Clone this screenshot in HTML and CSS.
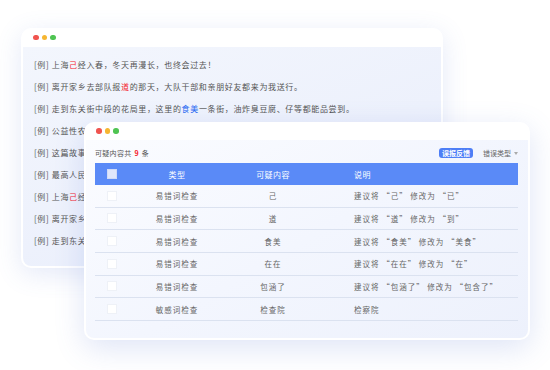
FILE: index.html
```html
<!DOCTYPE html>
<html lang="zh">
<head>
  <meta charset="UTF-8" />
  <meta name="viewport" content="width=device-width, initial-scale=1.0" />
  <title>文本纠错</title>
  <link rel="stylesheet" href="styles.css">
</head>
<body>
  <div class="stage">
    <div class="win back">
      <div class="bar"><i class="dot red"></i><i class="dot yellow"></i><i class="dot green"></i></div>
      <div class="doc">
        <p>[例] 上海<b class="err">己</b>经入春，冬天再漫长，也终会过去！</p>
        <p>[例] 离开家乡去部队报<b class="err">道</b>的那天，大队干部和亲朋好友都来为我送行。</p>
        <p>[例] 走到东关街中段的花局里，这里的<b class="hint">食美</b>一条街，油炸臭豆腐、仔等都能品尝到。</p>
        <p>[例] 公益性农村文化活动深受群众喜爱，参与的人越来越多。</p>
        <p>[例] 这篇故事情节曲折，人物形象鲜明，读来令人难忘。</p>
        <p>[例] 最高人民检查院发布了新的工作报告。</p>
        <p>[例] 上海<b class="err">己</b>经入春，冬天再漫长，也终会过去！</p>
        <p>[例] 离开家乡去部队报<b class="err">道</b>的那天，大队干部和亲朋好友都来为我送行。</p>
        <p>[例] 走到东关街中段的花局里，这里的<b class="hint">食美</b>一条街，油炸臭豆腐、仔等都能品尝到。</p>
      </div>
    </div>

    <div class="win front">
      <div class="bar"><i class="dot red"></i><i class="dot yellow"></i><i class="dot green"></i></div>
      <div class="panel">
        <div class="tools">
          <span class="count">可疑内容共 <em>9</em> 条</span>
          <span class="badge">误报反馈</span>
          <span class="filter">错误类型 <span class="caret"></span></span>
        </div>
        <div class="table">
          <div class="row head">
            <span class="cell"><span class="box"></span></span>
            <span class="cell mid">类型</span>
            <span class="cell mid">可疑内容</span>
            <span class="cell desc">说明</span>
          </div>
          <div class="row">
            <span class="cell"><span class="box"></span></span>
            <span class="cell mid">易错词检查</span>
            <span class="cell mid">己</span>
            <span class="cell desc">建议将 “己” 修改为 “已”</span>
          </div>
          <div class="row">
            <span class="cell"><span class="box"></span></span>
            <span class="cell mid">易错词检查</span>
            <span class="cell mid">道</span>
            <span class="cell desc">建议将 “道” 修改为 “到”</span>
          </div>
          <div class="row">
            <span class="cell"><span class="box"></span></span>
            <span class="cell mid">易错词检查</span>
            <span class="cell mid">食美</span>
            <span class="cell desc">建议将 “食美” 修改为 “美食”</span>
          </div>
          <div class="row">
            <span class="cell"><span class="box"></span></span>
            <span class="cell mid">易错词检查</span>
            <span class="cell mid">在在</span>
            <span class="cell desc">建议将 “在在” 修改为 “在”</span>
          </div>
          <div class="row">
            <span class="cell"><span class="box"></span></span>
            <span class="cell mid">易错词检查</span>
            <span class="cell mid">包涵了</span>
            <span class="cell desc">建议将 “包涵了” 修改为 “包含了”</span>
          </div>
          <div class="row">
            <span class="cell"><span class="box"></span></span>
            <span class="cell mid">敏感词检查</span>
            <span class="cell mid">检查院</span>
            <span class="cell desc">检察院</span>
          </div>
        </div>
      </div>
    </div>
  </div>
</body>
</html>
```

FILE: styles.css
```css
html, body {
  margin: 0;
  background: #fff;
}
body {
  font-family: "Noto Sans CJK SC", "Noto Sans", sans-serif;
  color: #555;
}
.stage {
  position: relative;
  width: 550px;
  height: 370px;
  overflow: hidden;
  padding-top: 28px;
  box-sizing: border-box;
}

.win {
  background: #fff;
  border-radius: 10px;
  box-shadow: 0 6px 26px rgba(90, 120, 210, 0.16);
  box-sizing: border-box;
  display: flex;
  flex-direction: column;
  overflow: hidden;
}
.bar {
  display: flex;
  align-items: center;
  gap: 3px;
  flex: none;
}
.dot {
  width: 5.5px;
  height: 5.5px;
  border-radius: 50%;
}
.dot.red { background: #f0544f; }
.dot.yellow { background: #f6b631; }
.dot.green { background: #4fc452; }

/* back window */
.back {
  margin-left: 21px;
  width: 422px;
  height: 240px;
  padding: 0 2px 2px;
}
.back .bar { height: 19px; padding-left: 10px; }
.doc {
  flex: 1;
  padding: 7px 0 0 11px;
  border-radius: 0 0 8px 8px;
  background: linear-gradient(160deg, #f3f6fd 0%, #edf1fc 55%, #e6ecfb 100%);
  overflow: hidden;
}
.doc p {
  margin: 0;
  height: 22px;
  line-height: 22px;
  font-size: 8px;
  letter-spacing: 0.65px;
  white-space: nowrap;
  color: #555;
}
.doc b { font-weight: normal; }
.err { color: #f5222d; }
.hint { color: #2b6cf3; }

/* front window */
.front {
  position: absolute;
  left: 84px;
  top: 122px;
  width: 446px;
  height: 218px;
  padding: 0 2px 2px;
  box-shadow: 0 8px 30px rgba(90, 120, 210, 0.2);
}
.front .bar { height: 18px; padding-left: 10px; }
.panel {
  flex: 1;
  padding: 8px 10px 0 9px;
  border-radius: 0 0 8px 8px;
  background: linear-gradient(150deg, #fbfcff 0%, #f3f6fe 50%, #edf1fc 100%);
}
.tools {
  display: flex;
  align-items: center;
  height: 10px;
  margin-bottom: 5px;
  font-size: 7px;
  color: #555;
}
.count {
  letter-spacing: 0.3px;
  word-spacing: 1px;
}
.count em {
  font-style: normal;
  color: #f5222d;
  font-weight: bold;
}
.badge {
  margin-left: auto;
  background: #4d7ef6;
  color: #fff;
  border-radius: 3px;
  padding: 0 3px;
  height: 10px;
  line-height: 10px;
  font-size: 7px;
  font-weight: bold;
}
.filter {
  margin-left: 10px;
  color: #666;
  display: flex;
  align-items: center;
  gap: 3px;
}
.caret {
  width: 0;
  height: 0;
  border-left: 2.5px solid transparent;
  border-right: 2.5px solid transparent;
  border-top: 3px solid #aaa;
}

.row {
  display: grid;
  grid-template-columns: 34px 96px 96px 1fr;
  align-items: center;
  height: 22.67px;
  box-sizing: border-box;
  border-bottom: 1px solid #dbe2f0;
  font-size: 7.5px;
  letter-spacing: 1px;
  color: #666;
}
.row.head {
  height: 22px;
  background: #5a8af7;
  border-bottom: none;
  color: #fff;
  font-size: 8px;
  letter-spacing: 0.4px;
}
.cell { white-space: nowrap; }
.mid { text-align: center; }
.desc { padding-left: 33px; }
.box {
  display: block;
  width: 10px;
  height: 10px;
  margin-left: 12px;
  background: #fff;
  border: 1px solid #eef1f7;
  box-sizing: border-box;
}
.head .box {
  background: #dfe6fb;
  border-color: #cfdaf7;
}
```
